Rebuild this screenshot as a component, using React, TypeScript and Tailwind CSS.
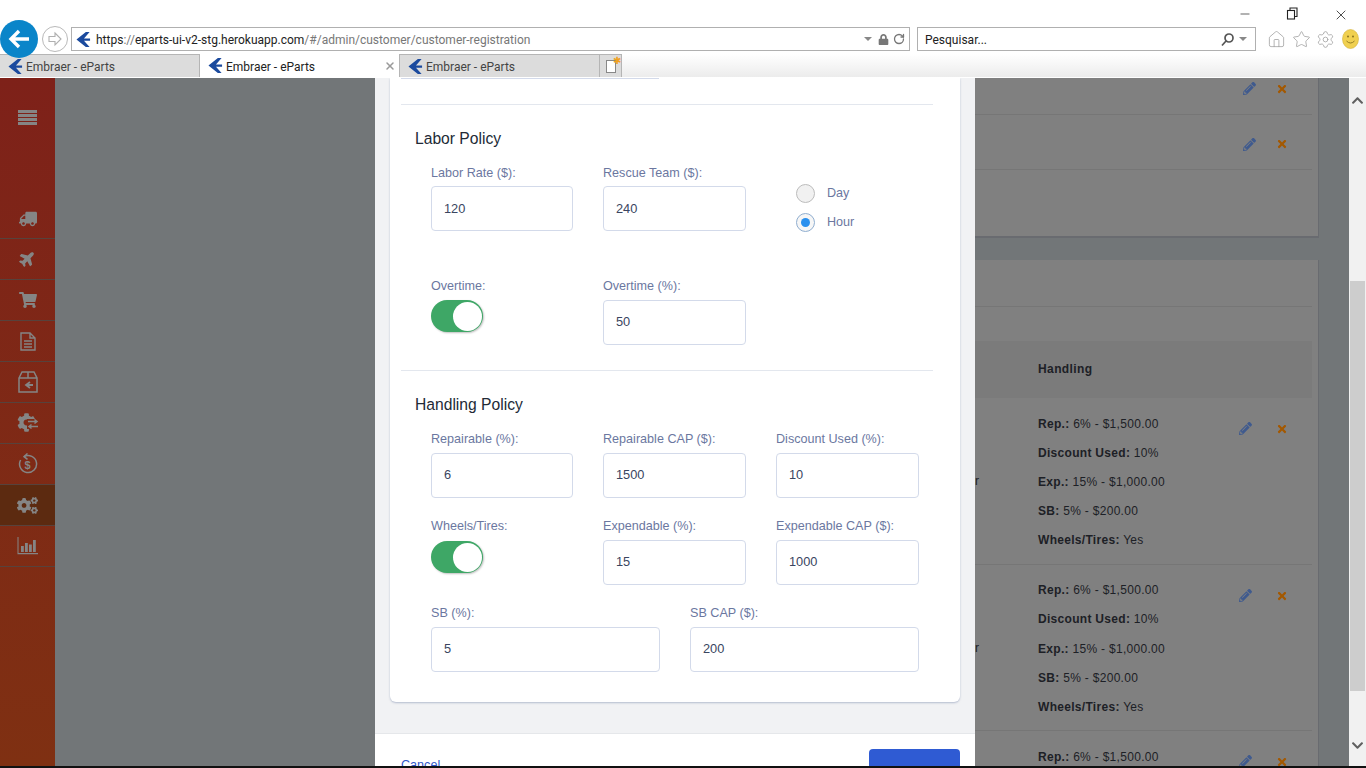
import React from "react";
import { FaTruck, FaPlane, FaShoppingCart, FaCogs, FaCog, FaPencilAlt, FaTimes, FaChevronUp, FaChevronDown, FaLock } from "react-icons/fa";
import { Home, Star, Settings, RotateCw, X, Minus } from "lucide-react";

const roboto = { fontFamily: "Roboto, sans-serif" };
const liberation = { fontFamily: '"Liberation Sans", sans-serif' };

function Logo({ size = 16 }: { size?: number }) {
  return (
    <svg width={size} height={size} viewBox="0 0 16 16" className="shrink-0">
      <path d="M10.5 0 L14.5 0 L8.5 6.8 H15 V9.2 H8.5 L14.5 16 H10.5 L0.5 8 Z" fill="#1b4a9e" />
    </svg>
  );
}

function Tab({ active, close }: { active?: boolean; close?: boolean }) {
  return (
    <div className={`w-[200px] h-[23px] flex items-center pl-[8px] pr-[3px] border-r border-[#b5b5b5] ${active ? "bg-white" : "bg-[#dcdcdc] border-t"}`}>
      <Logo size={15} />
      <span className={`ml-[3px] pt-[2px] text-[12px] flex-1 ${active ? "text-[#222]" : "text-[#444]"}`}>Embraer - eParts</span>
      {close && <X size={12} strokeWidth={3} className="text-[#9a9a9a]" />}
    </div>
  );
}

function Chrome() {
  return (
    <div className="h-[78px] shrink-0 bg-white flex flex-col" style={roboto}>
      <div className="h-[27px] flex items-start justify-end pt-[7px] pr-[17px] gap-[34px] text-[#222]">
        <Minus size={14} strokeWidth={1.2} />
        <svg width="13" height="13" viewBox="0 0 13 13" fill="none" stroke="#222" strokeWidth="1.1">
          <rect x="1.5" y="3.5" width="7" height="8.5" />
          <path d="M4 3.5 V1 H11 V9.5 H8.5" />
        </svg>
        <X size={16} strokeWidth={1.2} />
      </div>
      <div className="h-[27px] flex items-start relative">
        <div className="w-[38px] h-[38px] rounded-full bg-[#0a85c9] flex items-center justify-center mt-[-7px] shrink-0">
          <svg width="24" height="24" viewBox="0 0 24 24" fill="none" stroke="#fff" strokeWidth="3.4">
            <path d="M12 4 L4 12 L12 20 M4 12 H22" />
          </svg>
        </div>
        <div className="w-[26px] h-[26px] rounded-full border border-[#b9b9b9] flex items-center justify-center ml-[4px] mt-[-1px] shrink-0">
          <svg width="18" height="18" viewBox="0 0 18 18" fill="none" stroke="#b0b0b0" strokeWidth="1.1">
            <path d="M9 3 L15 9 L9 15 V11.5 H3 V6.5 H9 Z" />
          </svg>
        </div>
        <div className="ml-[3px] w-[839px] h-[24px] border border-[#b0b0b0] flex items-center pl-[4px] pr-[4px] shrink-0">
          <Logo size={15} />
          <span className="ml-[5px] pt-[2px] text-[12px] text-[#222] flex-1 whitespace-nowrap">
            https<span className="text-[#777]">://</span>eparts-ui-v2-stg.herokuapp.com<span className="text-[#777]">/#/admin/customer/customer-registration</span>
          </span>
          <div className="w-0 h-0 border-x-[4px] border-x-transparent border-t-[4px] border-t-[#888] mr-[6px]" />
          <FaLock size={11} className="text-[#777] mr-[4px]" />
          <RotateCw size={12} strokeWidth={2.6} className="text-[#777]" />
        </div>
        <div className="ml-[7px] w-[339px] h-[24px] border border-[#b0b0b0] flex items-center pl-[7px] pr-[8px] shrink-0">
          <span className="pt-[2px] text-[12px] text-[#222] flex-1">Pesquisar...</span>
          <svg width="15" height="15" viewBox="0 0 15 15" fill="none" stroke="#555" strokeWidth="1.7" className="mr-[4px]">
            <circle cx="9" cy="6" r="4" />
            <path d="M6 9 L2 13.5" />
          </svg>
          <div className="w-0 h-0 border-x-[4px] border-x-transparent border-t-[4px] border-t-[#888]" />
        </div>
        <div className="ml-[11px] flex items-center gap-[5.5px] text-[#a0a0a0] h-[24px]">
          <Home size={19} strokeWidth={1} />
          <Star size={19} strokeWidth={1} />
          <Settings size={19} strokeWidth={1} />
          <svg width="17" height="20" viewBox="0 0 17 20" className="ml-[1px]">
            <ellipse cx="8.5" cy="10" rx="8" ry="9.5" fill="#f0d050" stroke="#d4b23a" strokeWidth="0.6" />
            <circle cx="6" cy="7.5" r="1" fill="#8a7420" />
            <circle cx="11" cy="7.5" r="1" fill="#8a7420" />
            <path d="M4.5 12 Q8.5 16 12.5 12" fill="none" stroke="#8a7420" strokeWidth="0.9" />
          </svg>
        </div>
      </div>
      <div className="h-[24px] flex items-start">
        <Tab />
        <Tab active close />
        <Tab />
        <div className="w-[22px] h-[23px] bg-[#dcdcdc] border-r border-t border-[#b5b5b5] flex items-center justify-center relative">
          <div className="w-[10px] h-[13px] bg-white border border-[#888]" />
          <span className="absolute right-[0px] top-[1px] text-[10px] leading-[9px] text-[#f0a020]">✱</span>
        </div>
        <div className="flex-1 h-[23px] bg-gradient-to-b from-white to-[#ececec]" />
      </div>
    </div>
  );
}

function SideItem({ children, active }: { children: React.ReactNode; active?: boolean }) {
  return (
    <div className={`h-[41px] flex items-center justify-center border-b border-[#57423c] text-[#858585] ${active ? "bg-[#5c2a10]" : ""}`}>
      {children}
    </div>
  );
}

function Sidebar() {
  return (
    <div className="w-[55px] shrink-0 bg-gradient-to-b from-[#7e2119] to-[#7f3012] flex flex-col">
      <div className="h-[120px] shrink-0 pt-[32px] flex justify-center">
        <div className="w-[19px] flex flex-col gap-[1px]">
          <div className="h-[3px] bg-[#858585]" />
          <div className="h-[3px] bg-[#858585]" />
          <div className="h-[3px] bg-[#858585]" />
          <div className="h-[3px] bg-[#858585]" />
        </div>
      </div>
      <div className="h-[41px] flex items-end justify-center border-b border-[#57423c] text-[#858585] pb-[10px]">
        <FaTruck size={18} style={{ transform: "scaleX(-1)" }} />
      </div>
      <SideItem><FaPlane size={17} className="mb-[2px]" style={{ transform: "rotate(-45deg)" }} /></SideItem>
      <SideItem><FaShoppingCart size={18} /></SideItem>
      <SideItem>
        <svg width="16" height="19" viewBox="0 0 16 19" fill="none" stroke="currentColor" strokeWidth="1.4">
          <path d="M1 1 H10 L15 6 V18 H1 Z M10 1 V6 H15" />
          <path d="M4 9 H12 M4 12 H12 M4 15 H12" strokeWidth="1.6" />
        </svg>
      </SideItem>
      <SideItem>
        <svg width="20" height="22" viewBox="0 0 20 22" fill="none" stroke="currentColor" strokeWidth="1.5">
          <path d="M1 7 L4 1 H16 L19 7 V21 H1 Z M1 7 H19 M10 1 V7" />
          <path d="M12 11 L8 14 L12 17 M8 14 H15" strokeWidth="1.8" />
        </svg>
      </SideItem>
      <SideItem>
        <div className="relative w-[22px] h-[20px]">
          <FaCog size={19} className="absolute left-0 top-0" />
          <svg width="22" height="20" viewBox="0 0 22 20" fill="none" className="absolute left-0 top-0">
            <rect x="10" y="6" width="12" height="10" fill="#7f2a15" />
            <path d="M11 8.5 H20 M17.5 6.5 L20 8.5 L17.5 10.5 M21 13.5 H12 M14.5 11.5 L12 13.5 L14.5 15.5" stroke="currentColor" strokeWidth="1.5" />
          </svg>
        </div>
      </SideItem>
      <SideItem>
        <div className="relative w-[20px] h-[22px] flex items-center justify-center">
          <svg width="20" height="22" viewBox="0 0 20 22" fill="none" stroke="currentColor" strokeWidth="1.5" className="absolute inset-0">
            <path d="M6 3.6 A8.5 8.5 0 1 1 2.6 7" />
            <path d="M9.5 0.5 L6 3.6 L9.5 6.4" />
          </svg>
          <span className="relative text-[11px] leading-none font-bold mt-[3px]" style={liberation}>$</span>
        </div>
      </SideItem>
      <SideItem active><FaCogs size={21} /></SideItem>
      <SideItem>
        <svg width="21" height="18" viewBox="0 0 21 18" fill="currentColor">
          <path d="M0.5 0 H1.5 V16 H21 V17.2 H0.5 Z" />
          <rect x="4" y="9" width="2.8" height="6" />
          <rect x="8" y="6" width="2.8" height="9" />
          <rect x="12" y="7.5" width="2.8" height="7.5" />
          <rect x="16" y="3" width="2.8" height="12" />
        </svg>
      </SideItem>
    </div>
  );
}

function Actions({ narrow }: { narrow?: boolean }) {
  return (
    <div className={`flex items-center ${narrow ? "gap-[24px]" : "gap-[20px]"}`}>
      <FaPencilAlt size={13} className="text-[#3f5a8e]" />
      <FaTimes size={12} className="text-[#a35800]" />
    </div>
  );
}

type Line = [string, string];
const allLines: Line[] = [
  ["Rep.:", "6% - $1,500.00"],
  ["Discount Used:", "10%"],
  ["Exp.:", "15% - $1,000.00"],
  ["SB:", "5% - $200.00"],
  ["Wheels/Tires:", "Yes"],
];

function DataRow({ last, h, gaps, lines, pt }: { last?: boolean; h: number; gaps: number[]; lines: Line[]; pt: number }) {
  return (
    <div className={`flex items-start ${last ? "" : "border-b border-[#767676]"}`} style={{ height: h }}>
      <div className="w-[653px] h-full relative">
        {!last && <span className="absolute right-[59px] top-[75px] text-[12px] leading-[16px] text-[#1d2026]">r</span>}
      </div>
      <div className="w-[201px] flex flex-col text-[12px] leading-[16px] text-[#1d2026] tracking-[0.3px]" style={{ paddingTop: pt }}>
        {lines.map(([a, b], i) => (
          <div key={a} style={{ marginTop: i === 0 ? 0 : gaps[i - 1] }}>
            <b>{a}</b> {b}
          </div>
        ))}
      </div>
      <div className="pt-[24px]"><Actions narrow /></div>
    </div>
  );
}

function Background() {
  return (
    <div className="flex-1 min-w-0 bg-[#727678] pl-[330px] pr-[30px] overflow-hidden" style={liberation}>
      <div className="h-[160px] bg-[#808080] border-r border-b-2 border-[#696b70] pr-[6px]">
        <div className="h-[37px] border-b border-[#767676] flex items-start justify-end pt-[4px] pr-[24px]"><Actions /></div>
        <div className="h-[55px] border-b border-[#767676] flex items-center justify-end pt-[4px] pr-[24px]"><Actions /></div>
      </div>
      <div className="mt-[22px] bg-[#808080] border-r border-[#696b70] pr-[6px] h-[520px]">
        <div className="h-[47px] border-b border-[#767676]" />
        <div className="h-[34px]" />
        <div className="h-[57px] bg-[#7b7b7b] flex items-center pb-[2px] pl-[653px] text-[12px] font-bold text-[#1d2026] tracking-[0.4px]">Handling</div>
        <DataRow h={167} pt={18} gaps={[13, 13, 13, 13]} lines={allLines} />
        <DataRow h={166} pt={17} gaps={[13, 14, 13, 13]} lines={allLines} />
        <DataRow h={37} pt={18} gaps={[]} lines={allLines.slice(0, 1)} last />
      </div>
    </div>
  );
}

function Field({ label, value, gap = 5 }: { label: string; value: string; gap?: number }) {
  return (
    <div className="flex flex-col">
      <label className="text-[12.6px] leading-[16px] text-[#6b779f] whitespace-nowrap">{label}</label>
      <div style={{ marginTop: gap }} className={`h-[45px] border border-[#d3daea] rounded-[4px] bg-white flex items-center pl-[12px] text-[12.8px] text-[#3a4560] ${gap > 5 ? "pb-[2px]" : ""}`}>
        {value}
      </div>
    </div>
  );
}

function Toggle({ label, gap }: { label: string; gap: number }) {
  return (
    <div className="flex flex-col">
      <label className="text-[12.6px] leading-[16px] text-[#6b779f]">{label}</label>
      <div style={{ marginTop: gap }} className="w-[52px] h-[32px] rounded-full bg-[#3ea766] flex items-center justify-end pr-[1px] shadow-[1px_1px_2px_rgba(0,0,0,0.25)]">
        <div className="w-[29px] h-[29px] rounded-full bg-white" />
      </div>
    </div>
  );
}

function Radio({ label, on }: { label: string; on?: boolean }) {
  return (
    <div className="flex items-start">
      <div className={`w-[19px] h-[19px] rounded-full border flex items-center justify-center ${on ? "border-[#90aed0] bg-[#f6f6f6]" : "border-[#bcbcbc] bg-[#f1f1f1]"}`}>
        {on && <div className="w-[9px] h-[9px] rounded-full bg-[#2a90ee]" />}
      </div>
      <span className="ml-[12px] mt-[1px] text-[12.6px] leading-[16px] text-[#6b779f]">{label}</span>
    </div>
  );
}

function Modal() {
  return (
    <div className="absolute left-[320px] top-0 bottom-0 w-[600px] bg-[#f1f2f4] flex flex-col overflow-hidden" style={liberation}>
      <div className="mx-[15px] h-[624px] shrink-0 bg-white rounded-b-[6px] shadow-[0_1px_2px_rgba(120,135,170,0.5)]">
        <div className="ml-[11px] w-[258px] h-px bg-[#d3daea]" />
        <div className="mx-[11px] mt-[25px] w-[532px] h-px bg-[#e3e7ee]" />
        <h2 className="ml-[25px] mt-[24px] text-[15.65px] leading-[20px] text-[#222a36]">Labor Policy</h2>

        <div className="ml-[41px] mt-[16px] grid grid-cols-[142px_143px_143px] gap-x-[30px]">
          <Field label="Labor Rate ($):" value="120" />
          <Field label="Rescue Team ($):" value="240" />
          <div className="pl-[20px] pt-[19px] flex flex-col gap-[10px]">
            <Radio label="Day" />
            <Radio label="Hour" on />
          </div>
        </div>
        <div className="ml-[41px] mt-[46px] grid grid-cols-[142px_143px_143px] gap-x-[30px]">
          <Toggle label="Overtime:" gap={6} />
          <Field label="Overtime (%):" value="50" gap={6} />
        </div>

        <div className="mx-[11px] mt-[25px] w-[532px] h-px bg-[#e3e7ee]" />
        <h2 className="ml-[25px] mt-[24px] text-[15.65px] leading-[20px] text-[#222a36]">Handling Policy</h2>

        <div className="ml-[41px] mt-[16px] grid grid-cols-[142px_143px_143px] gap-x-[30px]">
          <Field label="Repairable (%):" value="6" gap={6} />
          <Field label="Repairable CAP ($):" value="1500" gap={6} />
          <Field label="Discount Used (%):" value="10" gap={6} />
        </div>
        <div className="ml-[41px] mt-[20px] grid grid-cols-[142px_143px_143px] gap-x-[30px]">
          <Toggle label="Wheels/Tires:" gap={7} />
          <Field label="Expendable (%):" value="15" gap={6} />
          <Field label="Expendable CAP ($):" value="1000" gap={6} />
        </div>
        <div className="ml-[41px] mt-[20px] grid grid-cols-[229px_229px] gap-x-[30px]">
          <Field label="SB (%):" value="5" gap={6} />
          <Field label="SB CAP ($):" value="200" gap={6} />
        </div>
      </div>
      <div className="h-[31px] shrink-0" />
      <div className="flex-1 bg-white border-t border-[#e5e7ea] flex items-start justify-between pl-[26px] pr-[15px] pt-[15px] relative">
        <span className="text-[12.6px] leading-[16px] text-[#2f55c8] mt-[8px]">Cancel</span>
        <div className="w-[91px] h-[40px] bg-[#2f5bd3] rounded-[4px] flex justify-center text-[13px] text-white pt-[12px]">Save</div>
      </div>
    </div>
  );
}

function Scrollbar() {
  return (
    <div className="w-[17px] shrink-0 bg-[#f1f1f1] flex flex-col items-center">
      <div className="h-[29px] flex items-end text-[#606060]"><FaChevronUp size={13} /></div>
      <div className="w-[15px] h-[410px] mt-[174px] bg-[#cdcdcd]" />
      <div className="pt-[48px] text-[#606060]"><FaChevronDown size={13} /></div>
    </div>
  );
}

export default function App() {
  return (
    <div className="w-[1366px] h-[768px] overflow-hidden flex flex-col bg-[#111]">
      <Chrome />
      <div className="h-[688px] shrink-0 flex overflow-hidden">
        <Sidebar />
        <div className="relative flex-1 flex min-w-0 overflow-hidden">
          <Background />
          <Modal />
        </div>
        <Scrollbar />
      </div>
    </div>
  );
}
